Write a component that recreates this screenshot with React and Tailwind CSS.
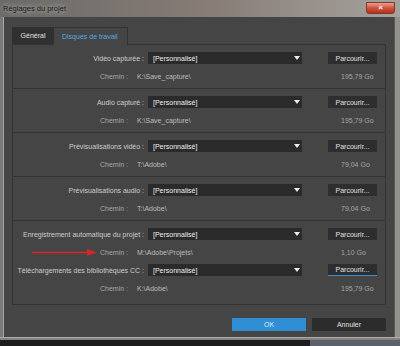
const sections = [
  [{ label: "Vidéo capturée :", path: "K:\\Save_capture\\", size: "195,79 Go" }],
  [{ label: "Audio capturé :", path: "K:\\Save_capture\\", size: "195,79 Go" }],
  [{ label: "Prévisualisations vidéo :", path: "T:\\Adobe\\", size: "79,04 Go" }],
  [{ label: "Prévisualisations audio :", path: "T:\\Adobe\\", size: "79,04 Go" }],
  [
    { label: "Enregistrement automatique du projet :", path: "M:\\Adobe\\Projets\\", size: "1,10 Go" },
    { label: "Téléchargements des bibliothèques CC :", path: "K:\\Adobe\\", size: "195,79 Go", focus: true },
  ],
];

function Row({ row, first }) {
  return (
    <div className={first ? "" : "mt-[5px]"}>
      <div className="flex h-[12px] items-center">
        <div className="w-[131px] text-right text-[#cdcdcd]">{row.label}</div>
        <div className="ml-[4px] flex h-[12px] w-[154px] items-center justify-between bg-[#2a2a2a] pl-[5px] pr-[2px] text-[#f0f0f0]">
          <span>[Personnalisé]</span>
          <svg width="6" height="4" viewBox="0 0 6 4">
            <path d="M0 0H6L3 4Z" fill="#eeeeee" />
          </svg>
        </div>
        <div
          className={
            "ml-[26px] flex h-[12px] w-[49px] items-center justify-center bg-[#2e2e2e] text-[#e0e0e0] " +
            (row.focus ? "border-b border-[#3b8fd6]" : "")
          }
        >
          Parcourir...
        </div>
      </div>
      <div className="mt-[5px] flex h-[14px] items-center">
        <div className="w-[115px] text-right text-[#a6a6a6]">Chemin :</div>
        <div className="ml-[9px] w-[204px] text-[#bcbcbc]">{row.path}</div>
        <div className="text-[#a6a6a6]">{row.size}</div>
      </div>
    </div>
  );
}

export default function App() {
  return (
    <div className="relative flex h-[346px] w-[400px] flex-col overflow-hidden bg-[#7a7876] font-['Liberation_Sans',Arial,sans-serif] text-[7px] leading-none">
      {/* title bar */}
      <div className="flex h-[17px] items-start justify-between bg-linear-to-r from-[#6b6a68] via-[#867b75] to-[#a6a29e]">
        <div className="ml-[3px] mt-[5px] text-[7.5px] text-[#161616] [text-shadow:0_0_5px_rgba(255,255,255,0.75)]">
          Réglages du projet
        </div>
        <div className="mr-[5px] mt-[2px] flex h-[12px] w-[29px] items-center justify-center rounded-b-[3px] border border-[#7a3a30] bg-linear-to-b from-[#e9a090] via-[#d0503a] to-[#b8301e] text-[8px] font-bold text-white">
          ×
        </div>
      </div>

      <div className="flex h-[320px]">
        <div className="w-[4px] border-r border-[#a8a6a4] bg-[#7c7a78]" />
        <div className="flex w-[390px] flex-col bg-[#454545] pt-[10px]">
          {/* tabs */}
          <div className="ml-[8px] flex h-[17px] items-start">
            <div className="flex h-[17px] w-[42px] items-center justify-center bg-[#303030] text-[#e2e2e2]">Général</div>
            <div className="relative z-10 flex h-[18px] w-[74px] items-start border-r border-t border-[#333] bg-[#454545] pl-[8px] pt-[5px] text-[#55aae0]">
              Disques de travail
            </div>
          </div>

          {/* pane */}
          <div className="ml-[8px] w-[374px] border border-[#333] pb-[9px]">
            {sections.map((sec, i) => (
              <div key={i} className={(i > 0 ? "border-t border-[#333] " : "") + (i === sections.length - 1 ? "pt-[7px]" : "pb-[5px] pt-[7px]")}>
                {sec.map((row, j) => (
                  <Row key={j} row={row} first={j === 0} />
                ))}
              </div>
            ))}
          </div>

          {/* buttons */}
          <div className="mr-[8px] mt-[13px] flex justify-end gap-[6px]">
            <div className="flex h-[13px] w-[74px] items-center justify-center bg-[#2f8ed4] text-[#d8ecfa]">OK</div>
            <div className="flex h-[13px] w-[74px] items-center justify-center bg-[#2c2c2c] text-[#e0e0e0]">Annuler</div>
          </div>
        </div>
        <div className="w-[6px] border-l border-[#5a5a5a] bg-[#94908c]" />
      </div>

      <div className="h-[3px] border-t border-[#b0aeac] bg-[#84827f]" />
      <div className="flex h-[6px]">
        <div className="w-[310px] bg-[#1d1d1d]" />
        <div className="flex-1 bg-[#5c6169]" />
      </div>

      {/* red annotation arrow */}
      <svg className="absolute left-[30px] top-[248px]" width="70" height="9" viewBox="0 0 70 9">
        <line x1="2" y1="4.5" x2="60" y2="4.5" stroke="#dc2424" strokeWidth="1.6" />
        <path d="M57 1.2L67 4.5L57 7.8Z" fill="#dc2424" />
      </svg>
    </div>
  );
}
